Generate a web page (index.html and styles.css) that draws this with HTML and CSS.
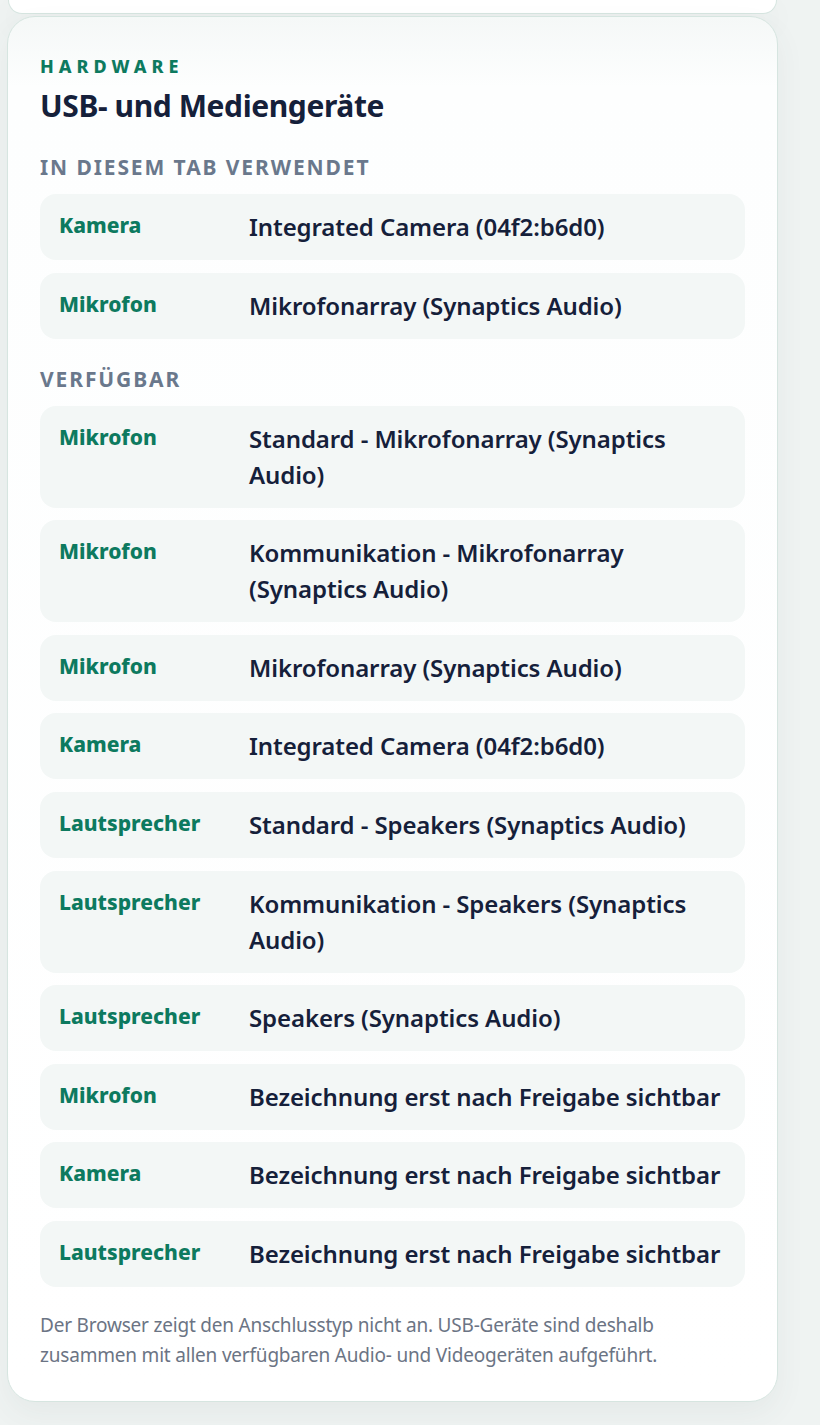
FILE: index.html
```html
<!DOCTYPE html>
<html lang="de">
<head>
<meta charset="utf-8">
<title>USB- und Mediengeräte</title>
<link rel="stylesheet" href="styles.css">
</head>
<body>
<div class="page">
  <div class="card card-prev"></div>
  <section class="card">
    <div class="eyebrow">HARDWARE</div>
    <h2 class="title">USB- und Mediengeräte</h2>

    <h3 class="section-head">IN DIESEM TAB VERWENDET</h3>
    <div class="list">
      <div class="row"><span class="kind">Kamera</span><span class="name">Integrated Camera (04f2:b6d0)</span></div>
      <div class="row"><span class="kind">Mikrofon</span><span class="name">Mikrofonarray (Synaptics Audio)</span></div>
    </div>

    <h3 class="section-head">VERFÜGBAR</h3>
    <div class="list">
      <div class="row"><span class="kind">Mikrofon</span><span class="name">Standard - Mikrofonarray (Synaptics Audio)</span></div>
      <div class="row"><span class="kind">Mikrofon</span><span class="name">Kommunikation - Mikrofonarray (Synaptics Audio)</span></div>
      <div class="row"><span class="kind">Mikrofon</span><span class="name">Mikrofonarray (Synaptics Audio)</span></div>
      <div class="row"><span class="kind">Kamera</span><span class="name">Integrated Camera (04f2:b6d0)</span></div>
      <div class="row"><span class="kind">Lautsprecher</span><span class="name">Standard - Speakers (Synaptics Audio)</span></div>
      <div class="row"><span class="kind">Lautsprecher</span><span class="name">Kommunikation - Speakers (Synaptics Audio)</span></div>
      <div class="row"><span class="kind">Lautsprecher</span><span class="name">Speakers (Synaptics Audio)</span></div>
      <div class="row"><span class="kind">Mikrofon</span><span class="name">Bezeichnung erst nach Freigabe sichtbar</span></div>
      <div class="row"><span class="kind">Kamera</span><span class="name">Bezeichnung erst nach Freigabe sichtbar</span></div>
      <div class="row"><span class="kind">Lautsprecher</span><span class="name">Bezeichnung erst nach Freigabe sichtbar</span></div>
    </div>

    <p class="note">Der Browser zeigt den Anschlusstyp nicht an. USB-Geräte sind deshalb zusammen mit allen verfügbaren Audio- und Videogeräten aufgeführt.</p>
  </section>
</div>
</body>
</html>
```

FILE: styles.css
```css
* { box-sizing: border-box; }

html, body {
  margin: 0;
  padding: 0;
}

body {
  background: #eff3f2;
  font-family: "Noto Sans", "Open Sans", sans-serif;
  color: #15203a;
  height: 1425px;
  overflow: hidden;
}

.page {
  width: 778px;
  padding-left: 7px;
  display: flex;
  flex-direction: column;
  gap: 2px;
}

.card {
  background: linear-gradient(180deg, #f5f8f7 0px, #fdfefe 70px, #ffffff 100%);
  border: 1.5px solid #d6e5e0;
  border-radius: 28px;
  box-shadow: 0 12px 30px rgba(60, 90, 80, 0.06);
  padding: 37px 32px 31px 32px;
}

.card-prev {
  height: 14px;
  padding: 0;
  background: #ffffff;
  border-top: none;
  border-radius: 0 0 24px 24px;
  margin-left: 1px;
  margin-right: 1px;
}

.eyebrow {
  color: #0d7a5f;
  font-weight: 800;
  font-size: 18px;
  letter-spacing: 5px;
  line-height: 24px;
}

.title {
  margin: 8px 0 0;
  font-size: 30px;
  font-weight: 700;
  line-height: 40px;
  color: #15203a;
  letter-spacing: -0.4px;
}

.section-head {
  margin: 27px 0 13px;
  font-size: 21px;
  font-weight: 700;
  color: #6a788c;
  letter-spacing: 1.9px;
  line-height: 28px;
}

.list + .section-head {
  margin-top: 26px;
}

.list {
  display: flex;
  flex-direction: column;
  gap: 12.6px;
}

.row {
  display: grid;
  grid-template-columns: 174px 1fr;
  column-gap: 16px;
  align-items: start;
  background: #f3f7f6;
  border-radius: 16px;
  padding: 15px 19px;
}

.kind {
  color: #0d7a5f;
  font-weight: 800;
  font-size: 21px;
  line-height: 33px;
  letter-spacing: 0px;
}

.name {
  color: #15203a;
  font-weight: 600;
  font-size: 24px;
  line-height: 36px;
  letter-spacing: -0.1px;
}

.note {
  margin: 23px 0 0;
  color: #6b7484;
  font-size: 19px;
  line-height: 30px;
  letter-spacing: -0.2px;
}
```
